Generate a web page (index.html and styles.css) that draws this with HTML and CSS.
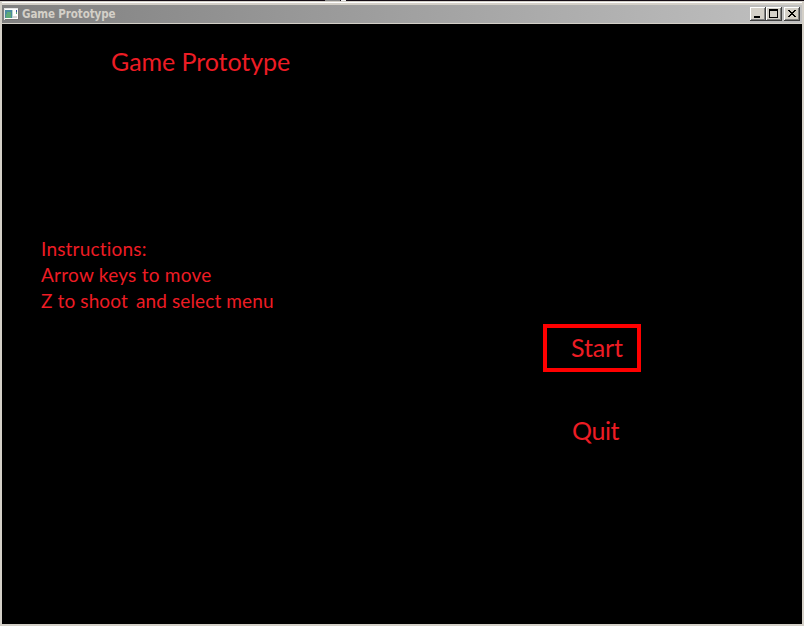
FILE: index.html
```html
<!DOCTYPE html>
<html lang="en">
<head>
<meta charset="utf-8">
<title>Game Prototype</title>
<link rel="stylesheet" href="styles.css">
</head>
<body>
<div class="desktop-edge"><i class="edge-strip"></i><i class="edge-mark"></i></div>
<div class="window">
  <header class="titlebar">
    <svg class="app-icon" width="16" height="16" viewBox="0 0 16 16" shape-rendering="crispEdges">
      <path fill="#e4e4e4" d="M0 2h14v12H0z"/><path fill="#fff" d="M1 3h13v10H1z"/>
      <path fill="#4b8ba0" d="M1 4h7v8H1z"/><path fill="#5daa79" d="M3 6h4v6H2V8h1z"/>
      <path fill="#b9d9d0" d="M8 4h1v8H8z"/><path fill="#3456a0" d="M12 4h1v2h-1z"/><path fill="#5ba878" d="M12 6h1v2h-1z"/>
      <path fill="#d8d8d8" d="M9 10h4v2H9z"/>
      <path fill="#777" d="M14 3h1v11H1v-1h13z"/>
    </svg>
    <span class="caption">Game Prototype</span>
    <div class="controls">
      <button class="control" aria-label="Minimize"><svg width="16" height="14" shape-rendering="crispEdges"><path d="M4 9h6v2H4z"/></svg></button>
      <button class="control" aria-label="Maximize"><svg width="16" height="14" shape-rendering="crispEdges"><path fill-rule="evenodd" d="M3 2h9v9H3zM4 4v6h7V4z"/></svg></button>
      <button class="control close" aria-label="Close"><svg width="16" height="14" shape-rendering="crispEdges"><path d="M4 3h2v1h1v1h2V4h1V3h2v1h-1v1h-1v1H9v1h1v1h1v1h1v1h-2V9H9V8H7v1H6v1H4V9h1V8h1V7h1V6H6V5H5V4H4z"/></svg></button>
    </div>
  </header>
  <main class="game">
    <h1 class="title">Game Prototype</h1>
    <div class="content">
      <div class="instructions">
        <p class="l1">Instructions:</p>
        <p class="l2">Arrow keys to move</p>
        <p class="l3">Z to shoot<span class="gap"> </span>and select menu</p>
      </div>
      <nav class="menu">
        <div class="item selected"><span>Start</span></div>
        <div class="item quit"><span>Quit</span></div>
      </nav>
    </div>
  </main>
</div>
</body>
</html>
```
FILE: styles.css
```css
* { box-sizing: border-box; }
body { margin: 0; width: 804px; height: 626px; overflow: hidden; background: #d4d0c8; display: flex; flex-direction: column; }
.desktop-edge { height: 1px; background: #140c14; display: flex; padding-left: 325px; flex: none; }
.edge-strip { width: 15px; background: #888; }
.edge-mark { width: 5px; background: #eee; margin-left: 1px; }
.window { height: 625px; border: 2px solid #d4d0c8; border-top: 0; padding-top: 4px; background: linear-gradient(#d4d0c8 0 1px, #fff 1px 2px, #d4d0c8 2px); }
.titlebar { height: 18px; display: flex; align-items: center; background: linear-gradient(90deg, #808080, #c0c0c0); padding: 0 2px; }
.app-icon { display: block; }
.caption { font: bold 11.5px/18px "DejaVu Sans Condensed", "DejaVu Sans", sans-serif; font-stretch: condensed; color: #d4d0c8; margin-left: 2px; letter-spacing: -0.1px; white-space: nowrap; }
.controls { margin-left: auto; display: flex; }
.control { width: 16px; height: 14px; padding: 0; border: 0; background: #d4d0c8; box-shadow: inset -1px -1px #404040, inset 1px 1px #fff, inset -2px -2px #808080; }
.control svg { display: block; }
.close { margin-left: 2px; }
.game { height: 600px; margin-top: 1px; background: #000; padding: 22px 0 0 39px; color: #ed1c24; font-family: Lato, "Open Sans", sans-serif; font-variant-ligatures: none; }
.title { margin: 0 0 0 70px; font-size: 25px; font-weight: 400; line-height: 30px; height: 30px; letter-spacing: -0.06px; }
.content { display: flex; margin-top: 160px; }
.instructions { width: 502px; font-size: 19px; line-height: 26px; }
.instructions p { margin: 0; white-space: nowrap; }
.l1 { letter-spacing: 0.2px; }
.l2 { letter-spacing: 0.25px; }
.l3 { letter-spacing: 0.12px; }
.gap { margin-right: 3px; }
.menu { margin-top: 88px; width: 98px; font-size: 25px; }
.item { height: 48px; border: 4px solid transparent; padding-left: 24px; line-height: 38px; white-space: nowrap; letter-spacing: -0.1px; }
.selected { border-color: #f00; margin-bottom: 35px; }
.quit { padding-left: 25px; letter-spacing: -0.4px; }
```
